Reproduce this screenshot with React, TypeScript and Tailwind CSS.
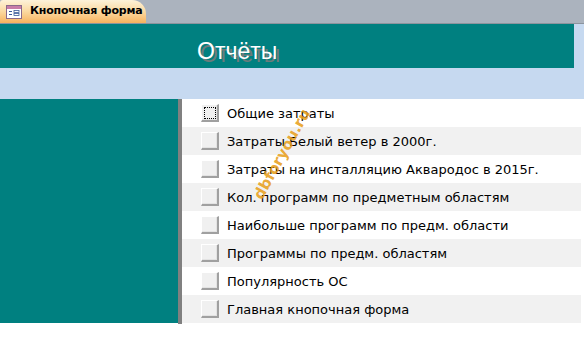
import React from "react";

const items = [
  "Общие затраты",
  "Затраты Белый ветер в 2000г.",
  "Затраты на инсталляцию Аквародос в 2015г.",
  "Кол. программ по предметным областям",
  "Наибольше программ по предм. области",
  "Программы по предм. областям",
  "Популярность ОС",
  "Главная кнопочная форма",
];

function FormIcon() {
  return (
    <svg width="16" height="14" viewBox="0 0 16 14">
      <rect x="0.5" y="0.5" width="15" height="13" fill="#fff" stroke="#8a6a8a" />
      <rect x="1" y="1" width="14" height="3" fill="#c87ca8" />
      <rect x="3" y="6" width="3" height="1" fill="#3a5a9a" />
      <rect x="3" y="9" width="3" height="1" fill="#3a5a9a" />
      <rect x="8" y="5.5" width="5" height="2" fill="none" stroke="#3a5a9a" strokeWidth="0.8" />
      <rect x="8" y="8.5" width="5" height="2" fill="none" stroke="#3a5a9a" strokeWidth="0.8" />
    </svg>
  );
}

function MenuButton({ focused }: { focused?: boolean }) {
  return (
    <div className="w-[18px] h-[18px] bg-[#f0f0f0] border-t border-l border-t-white border-l-white border-b-2 border-r-2 border-b-[#a0a0a0] border-r-[#a0a0a0] shadow-[inset_-1px_-1px_0_#e3e3e3] flex items-center justify-center">
      {focused && <div className="w-[12px] h-[12px] border border-dotted border-black" />}
    </div>
  );
}

export default function App() {
  return (
    <div className="relative w-[584px] h-[337px] bg-white overflow-hidden font-['Tahoma','DejaVu_Sans',sans-serif]">
      {/* tab bar */}
      <div className="h-[24px] bg-[#abb3be] border-b border-[#8c949e] flex items-end">
        <div className="h-[23px] w-[146px] rounded-tr-[14px] rounded-tl-[3px] bg-gradient-to-b from-[#fdf2d9] via-[#fbd9a0] to-[#f6b25c] flex items-center pl-[6px] gap-[8px]">
          <FormIcon />
          <span className="text-[11px] font-bold text-black font-['DejaVu_Sans',sans-serif] tracking-[-0.2px]">
            Кнопочная форма
          </span>
        </div>
      </div>

      {/* header */}
      <div className="bg-[#c6d9f0] h-[75px]">
        <div className="w-[574px] h-[44px] bg-[#008080] flex items-start pl-[197px] pt-[16px]">
          <span className="text-[23px] leading-none text-white font-['Liberation_Sans',sans-serif] [text-shadow:3px_3px_0_#6b7b7b]">
            Отчёты
          </span>
        </div>
      </div>

      {/* body */}
      <div className="flex">
        <div className="w-[178px] h-[224px] bg-[#008080]" />
        <div className="w-[4px] h-[225px] bg-[#808080]" />
        <div className="w-[399px] flex flex-col">
          {items.map((t, i) => (
            <div
              key={t}
              className={`h-[28px] flex items-center pl-[19px] gap-[8px] ${i % 2 === 1 ? "bg-[#f1f1f1]" : "bg-white"}`}
            >
              <MenuButton focused={i === 0} />
              <span className="text-[13px] pt-[2px] text-black font-['DejaVu_Sans',sans-serif]">{t}</span>
            </div>
          ))}
        </div>
      </div>

      {/* watermark */}
      <div className="absolute left-[232px] top-[143px] -rotate-[61deg] origin-center text-[15px] font-bold text-[#e8a020]/90 font-['DejaVu_Sans',sans-serif] pointer-events-none">
        dbforyou.ru
      </div>
    </div>
  );
}
